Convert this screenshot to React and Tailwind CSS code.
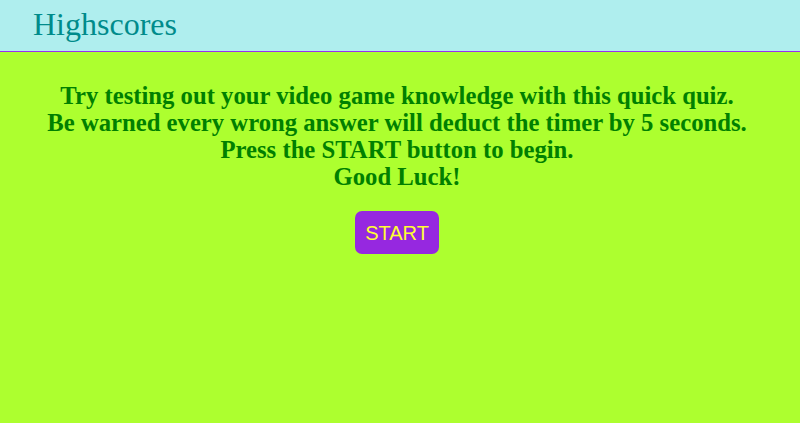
export default function App() {
  return (
    <div className="min-h-[423px] bg-[#adff2f]" style={{ fontFamily: '"Liberation Serif", serif' }}>
      <header className="h-[52px] bg-[#afeeee] border-b border-[#9a2ff0] px-[33px] flex items-center">
        <h1 className="text-[32px] text-[#008b8b] leading-none pb-[3px]">Highscores</h1>
      </header>
      <div className="pr-[6px]">
        <div className="pt-[30px] text-center text-[#008000] font-bold text-[24.7px] leading-[27px]">
          <p>Try testing out your video game knowledge with this quick quiz.</p>
          <p>Be warned every wrong answer will deduct the timer by 5 seconds.</p>
          <p>Press the START button to begin.</p>
          <p>Good Luck!</p>
        </div>
        <div className="flex justify-center pt-[21px]">
          <button
            className="w-[84px] h-[43px] rounded-[7px] bg-[#9628e0] text-[#ffff33] text-[20px]"
            style={{ fontFamily: '"Liberation Sans", sans-serif' }}
          >
            START
          </button>
        </div>
      </div>
    </div>
  );
}
